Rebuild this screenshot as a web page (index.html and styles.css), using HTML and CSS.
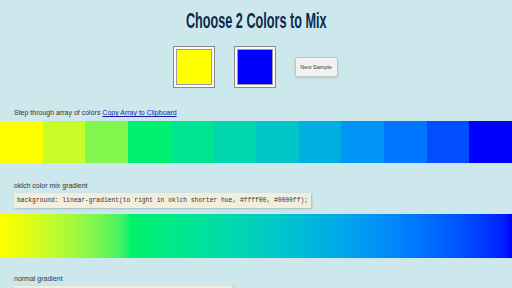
FILE: index.html
```html
<!DOCTYPE html>
<html lang="en">

<head>
    <meta charset="UTF-8">
    <meta name="viewport" content="width=device-width, initial-scale=1.0">
    <title>Color Mix</title>
    <link rel="stylesheet" href="styles.css">
</head>

<body>
    <h1 class="title"><span>Choose 2 Colors to Mix</span></h1>

    <div class="pickers">
        <input type="color" id="from" value="#ffff00">
        <input type="color" id="to" value="#0000ff">
        <button id="next">Next Sample</button>
    </div>

    <!-- steps -->
    <p class="label first">Step through array of colors <a href="#" id="copy">Copy Array to Clipboard</a></p>
    <div class="steps">
        <div></div><div></div><div></div><div></div><div></div><div></div>
        <div></div><div></div><div></div><div></div><div></div><div></div>
    </div>

    <!-- oklch -->
    <p class="label">oklch color mix gradient</p>
    <code class="snippet">background: linear-gradient(to right in oklch shorter hue, #ffff00, #0000ff);</code>
    <div class="bar oklch"></div>

    <!-- normal -->
    <p class="label last">normal gradient</p>
    <code class="snippet">background: linear-gradient(to right, #ffff00, #0000ff);</code>
    <div class="bar normal"></div>
</body>

</html>
```

FILE: styles.css
```css
* {
    margin: 0;
    padding: 0;
    box-sizing: border-box;
}

body {
    font-family: "Liberation Sans", Arial, sans-serif;
    background-color: #cce8ed;
    color: #222;
}

.title {
    text-align: center;
    padding-top: 8px;
    height: 40px;
    font-family: "Liberation Sans Narrow", "Liberation Sans", sans-serif;
    font-size: 22px;
    font-weight: bold;
    color: #0d2b4d;
}

.title span {
    display: inline-block;
    transform: scaleX(0.575);
}

.pickers {
    display: flex;
    justify-content: center;
    align-items: center;
    gap: 19px;
    margin-top: 6px;
    padding-right: 2px;
}

.pickers input {
    width: 42px;
    height: 42px;
    padding: 2px;
    border: 1px solid #8a8a8a;
    background-color: #fafafa;
    cursor: pointer;
}

.pickers input::-webkit-color-swatch-wrapper {
    padding: 0;
}

.pickers input::-webkit-color-swatch {
    border: 1px solid #9a9a9a;
}

.pickers button {
    width: 43px;
    height: 20px;
    font-family: "Liberation Sans", Arial, sans-serif;
    font-size: 5.5px;
    color: #333;
    background-color: #f2f2f2;
    border: 1px solid #c4c4c4;
    border-radius: 2px;
    box-shadow: 0 1px 2px rgba(0, 0, 0, 0.15);
}

.label {
    font-size: 7px;
    padding: 0 14px;
    color: #333;
    margin-top: 19px;
    line-height: 8px;
}

.label.first {
    margin-top: 21px;
}

.label.last {
    margin-top: 17px;
}

.label a {
    color: #1a1aa6;
}

.steps {
    display: grid;
    grid-template-columns: repeat(12, 1fr);
    height: 42px;
    margin-top: 4px;
}

.steps div:nth-child(1) { background: color-mix(in oklch shorter hue, #ffff00 100%, #0000ff); }
.steps div:nth-child(2) { background: color-mix(in oklch shorter hue, #ffff00 90.9%, #0000ff); }
.steps div:nth-child(3) { background: color-mix(in oklch shorter hue, #ffff00 81.8%, #0000ff); }
.steps div:nth-child(4) { background: color-mix(in oklch shorter hue, #ffff00 72.7%, #0000ff); }
.steps div:nth-child(5) { background: color-mix(in oklch shorter hue, #ffff00 63.6%, #0000ff); }
.steps div:nth-child(6) { background: color-mix(in oklch shorter hue, #ffff00 54.5%, #0000ff); }
.steps div:nth-child(7) { background: color-mix(in oklch shorter hue, #ffff00 45.5%, #0000ff); }
.steps div:nth-child(8) { background: color-mix(in oklch shorter hue, #ffff00 36.4%, #0000ff); }
.steps div:nth-child(9) { background: color-mix(in oklch shorter hue, #ffff00 27.3%, #0000ff); }
.steps div:nth-child(10) { background: color-mix(in oklch shorter hue, #ffff00 18.2%, #0000ff); }
.steps div:nth-child(11) { background: color-mix(in oklch shorter hue, #ffff00 9.1%, #0000ff); }
.steps div:nth-child(12) { background: color-mix(in oklch shorter hue, #ffff00 0%, #0000ff); }

.snippet {
    display: block;
    width: fit-content;
    margin: 3px 0 0 14px;
    padding: 4px 3px;
    font-family: "Liberation Mono", "Courier New", monospace;
    font-size: 6.3px;
    line-height: 7px;
    color: #333;
    background-color: #f3eedc;
    box-shadow: 1px 1px 2px rgba(0, 0, 0, 0.2);
}

.bar {
    height: 44px;
    margin-top: 6px;
}

.oklch {
    background: linear-gradient(to right in oklch shorter hue, #ffff00, #0000ff);
}

.normal {
    background: linear-gradient(to right, #ffff00, #0000ff);
}
```
